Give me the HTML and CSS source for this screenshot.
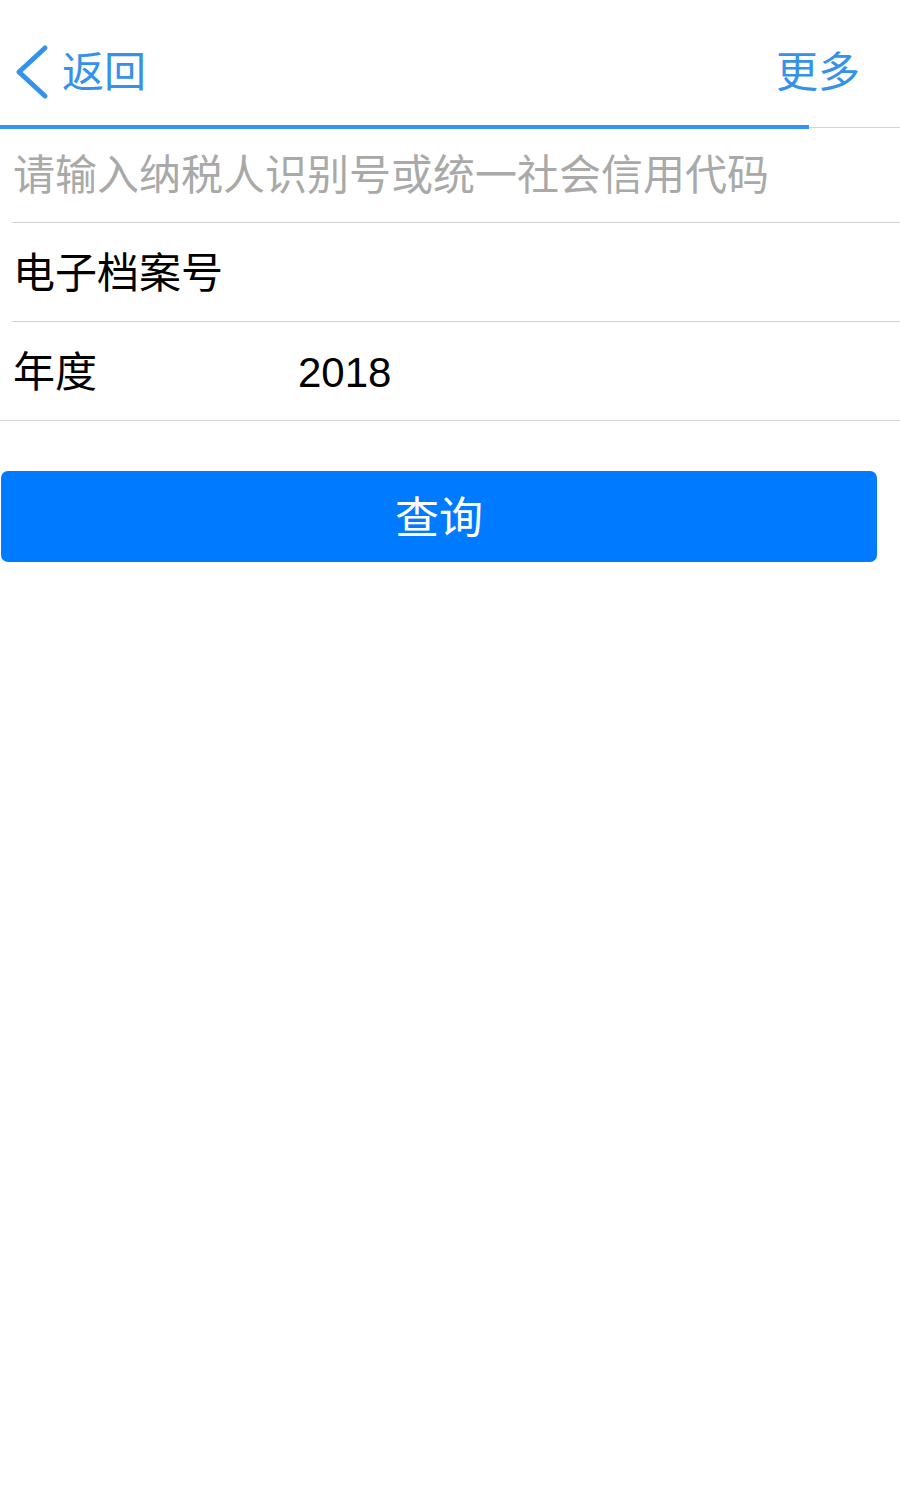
FILE: index.html
```html
<!DOCTYPE html>
<html lang="zh-CN">
<head>
<meta charset="utf-8">
<title>查询</title>
<link rel="stylesheet" href="styles.css">
</head>
<body>
<header class="nav">
  <a class="back">
    <svg class="chev" width="36" height="60" viewBox="0 0 36 60"><polyline points="31,6 5,30 31,54" fill="none" stroke="#3492ec" stroke-width="5" stroke-linecap="round" stroke-linejoin="round"/></svg>
    <span class="back-text">返回</span>
  </a>
  <span class="more">更多</span>
</header>
<div class="progress"><div class="bar"></div><div class="rest"></div></div>
<div class="row row-first"><span class="placeholder">请输入纳税人识别号或统一社会信用代码</span></div>
<div class="row"><span class="label">电子档案号</span></div>
<div class="row row-full"><span class="label label-col">年度</span><span class="value">2018</span></div>
<div class="actions"><button class="btn">查询</button></div>
</body>
</html>
```

FILE: styles.css
```css
* { box-sizing: border-box; }
html, body { margin: 0; padding: 0; background: #fff; }
body {
  font-family: "Liberation Sans", "Noto Sans CJK SC", sans-serif;
  width: 900px;
  height: 1485px;
  overflow: hidden;
}
.nav {
  height: 125px;
  padding: 20px 40px 0 14px;
  display: flex;
  align-items: center;
  justify-content: space-between;
  color: #3492ec;
  font-size: 42px;
}
.back { display: flex; align-items: center; }
.chev { display: block; margin-top: -2px; }
.back-text { margin-left: 12px; line-height: 1; }
.more { line-height: 1; }
.progress { height: 4px; display: flex; align-items: center; }
.bar { width: 809px; height: 4px; background: #3395f3; }
.rest { flex: 1; height: 1px; background: #d4d4d4; }
.row {
  height: 99px;
  margin-left: 12px;
  padding-left: 1px;
  padding-top: 4px;
  display: flex;
  align-items: center;
  border-bottom: 1px solid #d2d2d2;
  font-size: 42px;
  line-height: 1;
  color: #000;
}
.row-first { height: 94px; padding-top: 0; }
.row-full { margin-left: 0; padding-left: 13px; }
.placeholder { color: #a9a9a9; }
.label-col { width: 285px; flex: none; }
.value { font-size: 42px; }
.actions { padding: 50px 23px 0 1px; }
.btn {
  display: block;
  width: 100%;
  height: 91px;
  border: none;
  border-radius: 7px;
  background: #007aff;
  color: #fff;
  font-family: "Noto Sans CJK SC", sans-serif;
  font-size: 44px;
  line-height: 1;
  padding: 0 0 3px 0;
}
```
